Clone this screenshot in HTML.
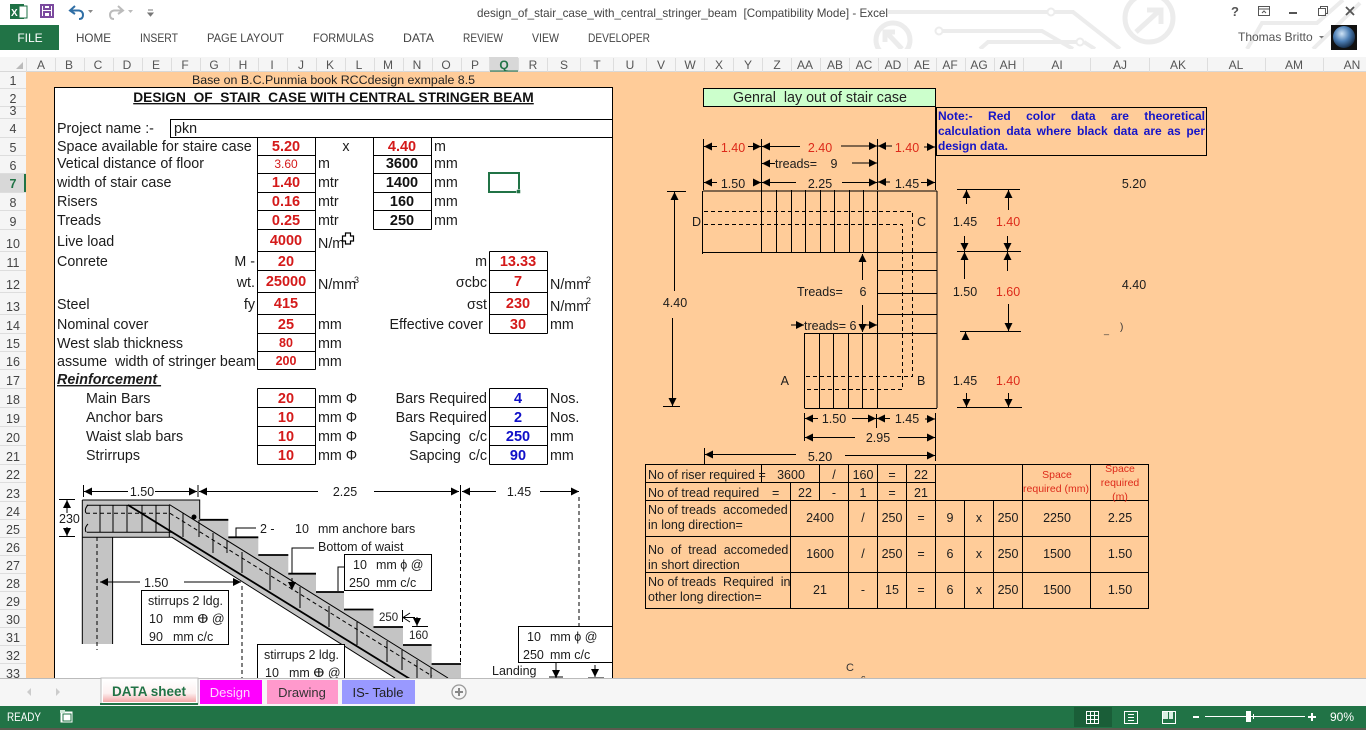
<!DOCTYPE html>
<html><head><meta charset="utf-8"><title>design_of_stair_case_with_central_stringer_beam</title>
<style>
html,body{margin:0;padding:0;width:1366px;height:730px;overflow:hidden;background:#fff}
svg{display:block;font-family:"Liberation Sans",sans-serif}
svg text{white-space:pre}
.t{font-size:14.3px;fill:#1c1c1c}
.m{text-anchor:middle}
.e{text-anchor:end}
.r{font-weight:bold;fill:#d41a1a;text-anchor:middle;font-size:14.5px}
.k{font-weight:bold;fill:#111;text-anchor:middle;font-size:14.5px}
.b{font-weight:bold;fill:#1010c8;text-anchor:middle;font-size:14.5px}
.s{font-size:12.5px;fill:#1c1c1c}
.h{font-size:12px;fill:#555;text-anchor:middle}
.n{font-size:12.5px;fill:#444;text-anchor:middle}
.red{fill:#dd2a1a}
.l{stroke:#000;stroke-width:1;fill:none}
.d{stroke:#000;stroke-width:1;fill:none;stroke-dasharray:4 3}
.a{stroke:#000;stroke-width:1;fill:none;marker-end:url(#ar);}
</style></head><body>
<svg width="1366" height="730" viewBox="0 0 1366 730" xmlns="http://www.w3.org/2000/svg">
<defs>
<marker id="ar" markerWidth="9" markerHeight="8" refX="8" refY="4" orient="auto" markerUnits="userSpaceOnUse"><path d="M0 0L8 4L0 8Z" fill="#000"/></marker>
<clipPath id="sheet"><rect x="0" y="72" width="1366" height="606"/></clipPath>
<clipPath id="rib"><rect x="860" y="0" width="506" height="49"/></clipPath>
<radialGradient id="gl" cx=".4" cy=".35" r=".7"><stop offset="0" stop-color="#cfe4f7"/><stop offset=".5" stop-color="#4d7fb5"/><stop offset="1" stop-color="#10243d"/></radialGradient>
<linearGradient id="tabg" x1="0" y1="0" x2="0" y2="1"><stop offset="0" stop-color="#fff"/><stop offset=".6" stop-color="#fdf0f0"/><stop offset="1" stop-color="#f3a8a8"/></linearGradient>
</defs>

<!-- ribbon -->
<rect width="1366" height="58" fill="#fff"/>
<g clip-path="url(#rib)" stroke="#ececec" fill="none" stroke-width="4">
<circle cx="893" cy="40" r="17" stroke-width="5"/><path d="M902 49L887 33M885 42V32H895" stroke-width="5"/>
<circle cx="1149" cy="18" r="24" stroke-width="5"/><path d="M1136 32L1160 10M1147 10H1161V24" stroke-width="5"/>
<path d="M888 12H1047M1055 12H1073L1120 49"/><circle cx="1051" cy="12" r="3.500" stroke-width="2"/>
<circle cx="939" cy="31" r="3.500" stroke-width="2"/><path d="M943 31H1042L1073 49"/>
<path d="M980 49L988 42H1076M1084 42L1095 49"/><circle cx="1080" cy="42" r="3.500" stroke-width="2"/>
<path d="M1247 49L1262 23H1317L1343 0M1313 49L1360 3"/>
</g>
<!-- qat -->
<rect x="10" y="4" width="14" height="15" fill="#1e7145"/><rect x="19" y="6" width="8" height="12" fill="#fff" stroke="#1e7145"/><text x="11" y="16" font-size="10" font-weight="bold" fill="#fff">X</text>
<g fill="none" stroke="#7b4a9e" stroke-width="2"><rect x="41" y="5" width="12" height="12"/><path d="M44 5v4h6V5M44 17v-5h6v5"/></g>
<path d="M75 6L70 10.500L75 14M70.500 10.500H79Q83 11 83 15T79 19" fill="none" stroke="#2f6ea5" stroke-width="2"/>
<path d="M88 10l2.500 3 2.500-3z" fill="#888"/>
<path d="M118 6L123 10.500L118 14M122.500 10.500H114Q110 11 110 15T114 19" fill="none" stroke="#bbb" stroke-width="2"/>
<path d="M128 10l2.500 3 2.500-3z" fill="#bbb"/>
<path d="M148 10h5M148 13l2.500 3 2.500-3z" stroke="#777" fill="#777" stroke-width="1"/>
<text x="477" y="17" font-size="12" fill="#444" textLength="411" lengthAdjust="spacingAndGlyphs">design_of_stair_case_with_central_stringer_beam  [Compatibility Mode] - Excel</text>
<text x="1235" y="16" class="m" font-size="13" font-weight="bold" fill="#555">?</text>
<g fill="none" stroke="#555"><rect x="1258.500" y="6.500" width="11" height="9"/><path d="M1258.500 9h11M1262 13l2-2 2 2"/>
<rect x="1318.500" y="8.500" width="7" height="7"/><path d="M1320.500 8.500v-2h7v7h-2"/></g>
<rect x="1289" y="12" width="8" height="2" fill="#555"/>
<path d="M1346 7l8 8M1354 7l-8 8" stroke="#555" stroke-width="1.800"/>
<rect x="0" y="25" width="59" height="25" fill="#217346"/>
<g font-size="12" fill="#444">
<text x="30" y="42" class="m" fill="#fff">FILE</text>
<text x="76" y="42" textLength="35" lengthAdjust="spacingAndGlyphs">HOME</text><text x="140" y="42" textLength="38" lengthAdjust="spacingAndGlyphs">INSERT</text><text x="207" y="42" textLength="77" lengthAdjust="spacingAndGlyphs">PAGE LAYOUT</text><text x="313" y="42" textLength="61" lengthAdjust="spacingAndGlyphs">FORMULAS</text><text x="403" y="42" textLength="31" lengthAdjust="spacingAndGlyphs">DATA</text><text x="463" y="42" textLength="40" lengthAdjust="spacingAndGlyphs">REVIEW</text><text x="532" y="42" textLength="27" lengthAdjust="spacingAndGlyphs">VIEW</text><text x="588" y="42" textLength="62" lengthAdjust="spacingAndGlyphs">DEVELOPER</text>
<text x="1238" y="41" fill="#555">Thomas Britto</text></g>
<path d="M1319 36l2.500 2.500 2.500-2.500z" fill="#777"/>
<rect x="1331" y="25" width="26" height="25" fill="#111"/><circle cx="1344" cy="37" r="11" fill="url(#gl)"/>

<!-- column header -->
<rect x="0" y="50" width="1366" height="22" fill="#fff"/>
<rect x="0" y="57" width="1366" height="15" fill="#f5f5f5"/>
<rect x="489" y="57" width="29" height="15" fill="#d8d8d8"/><rect x="489" y="70.500" width="29" height="2" fill="#217346"/>
<path d="M16 69l7-7v7z" fill="#bbb"/>
<rect y="71.500" width="1366" height="1" fill="#bbb"/>
<g stroke="#ddd"><path d="M26.500 58v14M55.500 58v14M84.500 58v14M113.500 58v14M142.500 58v14M171.500 58v14M200.500 58v14M229.500 58v14M258.500 58v14M287.500 58v14M316.500 58v14M345.500 58v14M374.500 58v14M403.500 58v14M432.500 58v14M461.500 58v14M489.500 58v14M518.500 58v14M547.500 58v14M580.500 58v14M613.500 58v14M646.500 58v14M675.500 58v14M704.500 58v14M733.500 58v14M762.500 58v14M791.500 58v14M820.500 58v14M849.500 58v14M878.500 58v14M907.500 58v14M936.500 58v14M965.500 58v14M994.500 58v14M1023.500 58v14M1090.500 58v14M1149.500 58v14M1207.500 58v14M1265.500 58v14M1323.500 58v14"/></g>
<g>
<text class="h" x="41" y="69">A</text><text class="h" x="69" y="69">B</text><text class="h" x="98" y="69">C</text><text class="h" x="127" y="69">D</text><text class="h" x="156" y="69">E</text><text class="h" x="185" y="69">F</text><text class="h" x="214" y="69">G</text><text class="h" x="243" y="69">H</text><text class="h" x="272" y="69">I</text><text class="h" x="301" y="69">J</text><text class="h" x="330" y="69">K</text><text class="h" x="359" y="69">L</text><text class="h" x="388" y="69">M</text><text class="h" x="417" y="69">N</text><text class="h" x="446" y="69">O</text><text class="h" x="475" y="69">P</text><text class="h" x="504" y="69" style="fill:#217346;font-weight:bold">Q</text><text class="h" x="533" y="69">R</text><text class="h" x="564" y="69">S</text><text class="h" x="597" y="69">T</text><text class="h" x="630" y="69">U</text><text class="h" x="661" y="69">V</text><text class="h" x="690" y="69">W</text><text class="h" x="719" y="69">X</text><text class="h" x="748" y="69">Y</text><text class="h" x="777" y="69">Z</text><text class="h" x="805" y="69">AA</text><text class="h" x="835" y="69">AB</text><text class="h" x="864" y="69">AC</text><text class="h" x="893" y="69">AD</text><text class="h" x="922" y="69">AE</text><text class="h" x="950" y="69">AF</text><text class="h" x="979" y="69">AG</text><text class="h" x="1008" y="69">AH</text><text class="h" x="1057" y="69">AI</text><text class="h" x="1120" y="69">AJ</text><text class="h" x="1178" y="69">AK</text><text class="h" x="1236" y="69">AL</text><text class="h" x="1294" y="69">AM</text><text class="h" x="1352" y="69">AN</text>
</g>

<!-- sheet -->
<g clip-path="url(#sheet)">
<rect x="26" y="72" width="1340" height="606" fill="#ffcc99"/>
<rect x="0" y="72" width="26" height="606" fill="#f5f5f5"/>
<rect x="0" y="173" width="26" height="19" fill="#d8d8d8"/><rect x="24" y="173" width="2" height="19" fill="#217346"/>
<path d="M0 88.500h26M0 106.500h26M0 118.500h26M0 137.500h26M0 155.500h26M0 173.500h26M0 192.500h26M0 210.500h26M0 229.500h26M0 251.500h26M0 270.500h26M0 292.500h26M0 314.500h26M0 333.500h26M0 351.500h26M0 369.500h26M0 388.500h26M0 407.500h26M0 426.500h26M0 445.500h26M0 464.500h26M0 482.500h26M0 501.500h26M0 519.500h26M0 537.500h26M0 555.500h26M0 573.500h26M0 591.500h26M0 609.500h26M0 627.500h26M0 645.500h26M0 663.500h26" stroke="#ddd"/>
<g>
<text class="n" x="13" y="85">1</text><text class="n" x="13" y="103">2</text><text class="n" x="13" y="115">3</text><text class="n" x="13" y="133">4</text><text class="n" x="13" y="152">5</text><text class="n" x="13" y="170">6</text><text class="n" x="13" y="188" style="fill:#217346;font-weight:bold">7</text><text class="n" x="13" y="207">8</text><text class="n" x="13" y="226">9</text><text class="n" x="13" y="248">10</text><text class="n" x="13" y="267">11</text><text class="n" x="13" y="289">12</text><text class="n" x="13" y="311">13</text><text class="n" x="13" y="330">14</text><text class="n" x="13" y="348">15</text><text class="n" x="13" y="366">16</text><text class="n" x="13" y="385">17</text><text class="n" x="13" y="404">18</text><text class="n" x="13" y="423">19</text><text class="n" x="13" y="442">20</text><text class="n" x="13" y="461">21</text><text class="n" x="13" y="479">22</text><text class="n" x="13" y="498">23</text><text class="n" x="13" y="516">24</text><text class="n" x="13" y="534">25</text><text class="n" x="13" y="552">26</text><text class="n" x="13" y="570">27</text><text class="n" x="13" y="588">28</text><text class="n" x="13" y="606">29</text><text class="n" x="13" y="624">30</text><text class="n" x="13" y="642">31</text><text class="n" x="13" y="660">32</text><text class="n" x="13" y="678">33</text>
</g>

<text x="333.500" y="84" class="m" font-size="12.400" fill="#222">Base on B.C.Punmia book RCCdesign exmpale 8.5</text>

<!-- main white form -->
<rect x="54.500" y="87.500" width="558" height="600" fill="#fff" stroke="#000"/>
<text x="333.500" y="102" class="m" font-size="13.750" font-weight="bold" fill="#111" text-decoration="underline">DESIGN  OF  STAIR  CASE WITH CENTRAL STRINGER BEAM</text>
<text x="57" y="133" class="t">Project name :-</text>
<rect x="170.500" y="119.500" width="442" height="18" fill="#fff" stroke="#000"/>
<text x="174" y="133" class="t">pkn</text>

<!-- cells -->
<g fill="none" stroke="#000">
<path d="M257.500 137.500v232M315.500 137.500v232M257.500 137.500h58M257.500 155.500h58M257.500 173.500h58M257.500 192.500h58M257.500 210.500h58M257.500 229.500h58M257.500 251.500h58M257.500 270.500h58M257.500 292.500h58M257.500 314.500h58M257.500 333.500h58M257.500 351.500h58M257.500 369.500h58"/>
<path d="M373.500 137.500v92M431.500 137.500v92M373.500 137.500h58M373.500 155.500h58M373.500 173.500h58M373.500 192.500h58M373.500 210.500h58M373.500 229.500h58"/>
<path d="M489.500 251.500v82M547.500 251.500v82M489.500 251.500h58M489.500 270.500h58M489.500 292.500h58M489.500 314.500h58M489.500 333.500h58"/>
<path d="M257.500 388.500v76M315.500 388.500v76M257.500 388.500h58M257.500 407.500h58M257.500 426.500h58M257.500 445.500h58M257.500 464.500h58"/>
<path d="M489.500 388.500v76M547.500 388.500v76M489.500 388.500h58M489.500 407.500h58M489.500 426.500h58M489.500 445.500h58M489.500 464.500h58"/>
</g>
<!-- labels -->
<g class="t">
<text class="t" x="57" y="151">Space available for staire case</text>
<text class="t" x="57" y="168">Vetical distance of floor</text>
<text class="t" x="57" y="187">width of stair case</text>
<text class="t" x="57" y="206">Risers</text>
<text class="t" x="57" y="225">Treads</text>
<text class="t" x="57" y="246">Live load</text>
<text class="t" x="57" y="266">Conrete</text>
<text class="t e" x="255" y="266">M -</text>
<text class="t e" x="255" y="287">wt.</text>
<text class="t" x="57" y="309">Steel</text>
<text class="t e" x="255" y="309">fy</text>
<text class="t" x="57" y="329">Nominal cover</text>
<text class="t" x="57" y="348">West slab thickness</text>
<text class="t" x="57" y="366">assume  width of stringer beam</text>
<text class="t" x="57" y="384" font-weight="bold" font-style="italic" text-decoration="underline">Reinforcement </text>
<text class="t" x="86" y="403">Main Bars</text>
<text class="t" x="86" y="422">Anchor bars</text>
<text class="t" x="86" y="441">Waist slab bars</text>
<text class="t" x="86" y="460">Strirrups</text>
<text class="t m" x="346" y="151">x</text>
<text class="t" x="434" y="151">m</text>
<text class="t" x="318" y="168">m</text><text class="t" x="434" y="168">mm</text>
<text class="t" x="318" y="187">mtr</text><text class="t" x="434" y="187">mm</text>
<text class="t" x="318" y="206">mtr</text><text class="t" x="434" y="206">mm</text>
<text class="t" x="318" y="225">mtr</text><text class="t" x="434" y="225">mm</text>
<text class="t" x="318" y="248">N/m</text>
<text class="t" x="318" y="289">N/mm</text><text x="354" y="283" font-size="9" fill="#222">3</text>
<text class="t" x="318" y="329">mm</text><text class="t" x="318" y="348">mm</text><text class="t" x="318" y="366">mm</text>
<text class="t" x="318" y="403">mm Φ</text><text class="t" x="318" y="422">mm Φ</text><text class="t" x="318" y="441">mm Φ</text><text class="t" x="318" y="460">mm Φ</text>
<text class="t e" x="487" y="266">m</text>
<text class="t e" x="487" y="287">σcbc</text>
<text class="t e" x="487" y="309">σst</text>
<text class="t e" x="483" y="329">Effective cover</text>
<text class="t e" x="487" y="403">Bars Required</text>
<text class="t e" x="487" y="422">Bars Required</text>
<text class="t e" x="487" y="441">Sapcing  c/c</text>
<text class="t e" x="487" y="460">Sapcing  c/c</text>
<text class="t" x="550" y="289">N/mm</text><text x="586" y="283" font-size="9" fill="#222">2</text>
<text class="t" x="550" y="311">N/mm</text><text x="586" y="304" font-size="9" fill="#222">2</text>
<text class="t" x="550" y="329">mm</text>
<text class="t" x="550" y="403">Nos.</text><text class="t" x="550" y="422">Nos.</text>
<text class="t" x="550" y="441">mm</text><text class="t" x="550" y="460">mm</text>
</g>
<!-- values -->
<text class="r" x="286" y="151">5.20</text>
<text class="r" x="286" y="168" style="font-size:12px;font-weight:normal">3.60</text>
<text class="r" x="286" y="187">1.40</text><text class="r" x="286" y="206">0.16</text><text class="r" x="286" y="225">0.25</text>
<text class="r" x="286" y="245">4000</text><text class="r" x="286" y="266">20</text><text class="r" x="286" y="286">25000</text><text class="r" x="286" y="308">415</text><text class="r" x="286" y="329">25</text>
<text class="r" x="286" y="347" style="font-size:12.500px">80</text><text class="r" x="286" y="365" style="font-size:12.500px">200</text>
<text class="r" x="286" y="403">20</text><text class="r" x="286" y="422">10</text><text class="r" x="286" y="441">10</text><text class="r" x="286" y="460">10</text>
<text class="r" x="402" y="151">4.40</text>
<text class="k" x="402" y="168">3600</text><text class="k" x="402" y="187">1400</text><text class="k" x="402" y="206">160</text><text class="k" x="402" y="225">250</text>
<text class="r" x="518" y="266">13.33</text><text class="r" x="518" y="286">7</text><text class="r" x="518" y="308">230</text><text class="r" x="518" y="329">30</text>
<text class="b" x="518" y="403">4</text><text class="b" x="518" y="422">2</text><text class="b" x="518" y="441">250</text><text class="b" x="518" y="460">90</text>
<!-- selection + cursor -->
<rect x="489" y="173" width="30" height="19" fill="none" stroke="#217346" stroke-width="2"/><rect x="516.500" y="189.500" width="4" height="4" fill="#217346" stroke="#fff" stroke-width=".5"/>
<path d="M345.500 233h5v3h3v5h-3v3h-5v-3h-3v-5h3z" fill="#fff" stroke="#000" stroke-width="1.200"/>

<!-- stair section -->
<path d="M82.300 500H199.700V519.300H228.300V537.300H258.300V555H288.300V573.700H316V592H344V609H373.500V627H403V645H431.600V663.500H461V690H413L172 537.300H112.600V644H82.300Z" fill="#c4c4c4"/>
<path d="M82.300 537.300H172L395 678M82.300 500H199.700V519.300M82.300 500V644M112.600 537.300V644" class="l"/>
<path d="M199.700 519.800H228.300M228.300 537.300H258.300M258.300 555H288.300M288.300 573.700H316M316 592H344M344 609.500H373.500M373.500 627H403M403 645H431.600M431.600 664H461" stroke="#000" stroke-width="1.800" fill="none"/>
<path d="M169.300 504.500L448 678" class="l"/>
<path d="M128 505L410 679" stroke="#000" stroke-width="1.800" fill="none"/>
<path d="M86.700 505.300H169.300V537M86.700 532.300H172" class="l" stroke-width="1.200"/>
<path d="M100 505V532M113 505V532M127 505V532M142 505V532M156 505V532M183 513V537M199 520V537M213 533V553M227 540V553M242 552V573M270 568V590M300 587V608M329 606V627M357 622V645M387 641V662M402 650V670M417 660V678M431 668V678" class="l"/>
<path d="M86 513.300H170L432 676" class="d"/>
<path d="M88 505Q84 509 86 513M88 524Q84 528 86 532" class="l"/>
<circle cx="194" cy="517" r="2.500" fill="#000"/>
<path d="M97 537V650" class="d"/>
<path d="M242 586V678M460.500 497V665M579 497V626" class="d"/>
<path d="M83.500 485V497M198 485V497M460.500 485V497" class="l"/>
<path d="M128 491.500H84" class="a"/><path d="M155 491.500H197" class="a"/><path d="M318 491.500H199" class="a"/><path d="M374 491.500H459" class="a"/><path d="M496 491.500H462" class="a"/><path d="M540 491.500H579" class="a"/>
<text class="s m" x="142" y="496">1.50</text><text class="s m" x="345" y="496">2.25</text><text class="s m" x="519" y="496">1.45</text>
<text class="s" x="59" y="523">230</text>
<path d="M59 499.500H75M59 536.500H75" class="l"/><path d="M67 513V500" class="a"/><path d="M67 527V536" class="a"/>
<!-- labels -->
<path d="M236 537V528H256M292 573V548H314M338 591V567H348" class="l"/>
<text class="s" x="260" y="533">2 -</text><text class="s" x="295" y="533">10</text><text class="s" x="318" y="533">mm anchore bars</text>
<text class="s" x="318" y="551">Bottom of waist</text>
<path d="M292 578V590" class="a"/>
<path d="M140 582H100" class="a"/><path d="M184 582H241" class="a"/>
<text class="s" x="144" y="587">1.50</text>
<rect x="344.500" y="554.500" width="87" height="36" fill="#fff" stroke="#000"/>
<text class="s" x="353" y="569">10</text><text class="s" x="376" y="569">mm ϕ @</text><text class="s" x="349" y="587">250</text><text class="s" x="376" y="587">mm c/c</text>
<rect x="141.500" y="590.500" width="87" height="54" fill="#fff" stroke="#000"/>
<text class="s" x="148" y="605">stirrups 2 ldg.</text><text class="s" x="149" y="623">10</text><text class="s" x="173" y="623">mm ⴲ @</text><text class="s" x="149" y="641">90</text><text class="s" x="173" y="641">mm c/c</text>
<rect x="257.500" y="644.500" width="87" height="50" fill="#fff" stroke="#000"/>
<text class="s" x="264" y="659">stirrups 2 ldg.</text><text class="s" x="265" y="677">10</text><text class="s" x="289" y="677">mm ⴲ @</text>
<text font-size="11.500" fill="#222" x="379" y="621">250</text>
<path d="M402.500 610V622M412 626.500H428M415 617.500H403M403 617.500L410 613M403 617.500L410 622" class="l"/><path d="M417 617V626" class="a"/>
<text font-size="11.500" fill="#222" x="409" y="639">160</text>
<rect x="518.500" y="626.500" width="94" height="36" fill="#fff" stroke="#000"/>
<text class="s" x="527" y="641">10</text><text class="s" x="550" y="641">mm ϕ @</text><text class="s" x="523" y="659">250</text><text class="s" x="550" y="659">mm c/c</text>
<text class="s" x="492" y="675">Landing</text>
<path d="M556 663V678" class="a"/><path d="M595 665V677" class="a"/>
<path d="M549 677H563M588 678H604" class="l"/>

<!-- layout title -->
<rect x="703.500" y="88.500" width="232" height="18" fill="#ccffcc" stroke="#000"/>
<text x="820" y="102" class="m" font-size="14.300" fill="#222">Genral  lay out of stair case</text>
<rect x="936.500" y="107.500" width="270" height="48" fill="#ffcc99" stroke="#000"/>
<foreignObject x="938" y="109" width="267" height="46"><div xmlns="http://www.w3.org/1999/xhtml" style="font:bold 12px/15px 'Liberation Sans',sans-serif;color:#1414c8;text-align:justify">Note:- Red color data are theoretical calculation data where black data are as per design data.</div></foreignObject>

<!-- layout drawing -->
<path d="M703.500 139V190M761.500 139V190M877.500 139V190M935.500 107V190" class="l"/>
<path d="M703 191H937M702.500 191V254M702 252.500H937M937 191V408M877.500 191V408M877 270.500H937M877 293.500H937M877 314.500H937M804.500 333.500H937M804.500 333V408M804.500 408.500H937M761.500 190V252M776.500 190V252M791.500 190V252M805.500 190V252M820.500 190V252M834.500 190V252M849.500 190V252M863.500 190V252M819.500 333V408M833.500 333V408M848.500 333V408M862.500 333V408" class="l"/>
<path d="M704 211.500H912.500V376.500H805M704 224.500H902.500V389.500H805" class="d"/>
<!-- top dims -->
<path d="M717 146.500H704" class="a"/><path d="M748 146.500H761" class="a"/><path d="M800 146.500H762" class="a"/><path d="M841 146H877" class="a"/><path d="M892 146H878" class="a"/><path d="M924 147H935" class="a"/>
<path d="M775 163.500H762" class="a"/><path d="M852 163H877" class="a"/>
<path d="M717 182.500H704" class="a"/><path d="M755 182.500H761" class="a"/><path d="M796 182.500H762" class="a"/><path d="M842 182.500H877" class="a"/><path d="M890 182H878" class="a"/><path d="M921 182.500H935" class="a"/>
<text class="s m red" x="733" y="152">1.40</text><text class="s m red" x="820" y="152">2.40</text><text class="s m red" x="907" y="152">1.40</text>
<text class="s" x="775" y="168">treads=</text><text class="s m" x="834" y="168">9</text>
<text class="s m" x="733" y="188">1.50</text><text class="s m" x="820" y="188">2.25</text><text class="s m" x="907" y="188">1.45</text>
<text class="s e" x="701" y="226">D</text><text class="s" x="917" y="226">C</text>
<text class="s e" x="789" y="385">A</text><text class="s" x="917" y="385">B</text>
<text class="s m" x="675" y="307">4.40</text>
<text class="s" x="797" y="296">Treads=</text><text class="s m" x="863" y="296">6</text>
<text class="s" x="804" y="330">treads= 6</text>
<text class="s m" x="965" y="226">1.45</text><text class="s m red" x="1008" y="226">1.40</text>
<text class="s m" x="965" y="296">1.50</text><text class="s m red" x="1008" y="296">1.60</text>
<text class="s m" x="965" y="385">1.45</text><text class="s m red" x="1008" y="385">1.40</text>
<text class="s m" x="834" y="423">1.50</text><text class="s m" x="907" y="423">1.45</text>
<text class="s m" x="878" y="442">2.95</text><text class="s m" x="820" y="461">5.20</text>
<text class="s m" x="1134" y="188">5.20</text><text class="s m" x="1134" y="289">4.40</text>
<path d="M667 191.500H686M663 406.500H680" class="l"/>
<path d="M674.500 291V192" class="a"/><path d="M672.500 318V406" class="a"/>
<path d="M862.500 280V254" class="a"/><path d="M862.500 305V332" class="a"/>
<path d="M791 325H804" class="a"/><path d="M860 325H877" class="a"/>
<path d="M957 189.500H1020M957 251.500H1021M960 331.500H1021M957 407.500H1022" class="l"/>
<path d="M966.500 204V190" class="a"/><path d="M1008.500 210V190" class="a"/><path d="M964.500 236V251" class="a"/><path d="M1007.500 236V251" class="a"/><path d="M964.500 279V252" class="a"/><path d="M1007.500 271V252" class="a"/><path d="M1008.500 304V331" class="a"/><path d="M965.500 340V332" class="a"/><path d="M966.500 393V407" class="a"/><path d="M1008.500 393V407" class="a"/>
<path d="M804.500 413V441M876.500 414V428M935.500 413V461M704.500 448V464" class="l"/>
<path d="M818 418.500H805" class="a"/><path d="M852 418.500H876" class="a"/><path d="M890 418.500H877" class="a"/><path d="M925 419H935" class="a"/>
<path d="M855 437.500H805" class="a"/><path d="M898 437.500H935" class="a"/>
<path d="M796 454.500H705" class="a"/><path d="M845 455.500H935" class="a"/>

<!-- bottom table -->
<rect x="645.500" y="464.500" width="503" height="144" fill="none" stroke="#000"/>
<path d="M645.500 482.500H935.500M645.500 500.500H1148.500M645.500 536.500H1148.500M645.500 572.500H1148.500
M761.500 464.500V482.500M819.500 464.500V500.500M848.500 464.500V608.500M877.500 464.500V608.500M906.500 464.500V608.500M935.500 464.500V608.500M790.500 482.500V608.500M964.500 500.500V608.500M993.500 500.500V608.500M1022.500 464.500V608.500M1090.500 464.500V608.500" stroke="#000" fill="none"/>
<g>
<text class="s" x="648" y="479">No of riser required =</text><text class="s m" x="791" y="479">3600</text><text class="s m" x="834" y="479">/</text><text class="s m" x="863" y="479">160</text><text class="s m" x="892" y="479">=</text><text class="s m" x="921" y="479">22</text>
<text class="s" x="648" y="497">No of tread required</text><text class="s" x="772" y="497">=</text><text class="s m" x="805" y="497">22</text><text class="s m" x="834" y="497">-</text><text class="s m" x="863" y="497">1</text><text class="s m" x="892" y="497">=</text><text class="s m" x="921" y="497">21</text>
<text class="m" x="1057" y="478" font-size="10.500" fill="#dd2a1a">Space</text><text class="m" x="1056" y="492" font-size="10.500" fill="#dd2a1a">required (mm)</text>
<text class="m" x="1120" y="472" font-size="10.500" fill="#dd2a1a">Space</text><text class="m" x="1120" y="486" font-size="10.500" fill="#dd2a1a">required</text><text class="m" x="1120" y="500" font-size="10.500" fill="#dd2a1a">(m)</text>
<text class="s" x="648" y="514">No of treads  accomeded</text><text class="s" x="648" y="529">in long direction=</text>
<text class="s" x="648" y="554">No  of  tread  accomeded</text><text class="s" x="648" y="569">in short direction</text>
<text class="s" x="648" y="586">No of treads  Required  in</text><text class="s" x="648" y="601">other long direction=</text>
<text class="s m" x="820" y="522">2400</text><text class="s m" x="863" y="522">/</text><text class="s m" x="892" y="522">250</text><text class="s m" x="921" y="522">=</text><text class="s m" x="950" y="522">9</text><text class="s m" x="979" y="522">x</text><text class="s m" x="1008" y="522">250</text><text class="s m" x="1057" y="522">2250</text><text class="s m" x="1120" y="522">2.25</text>
<text class="s m" x="820" y="558">1600</text><text class="s m" x="863" y="558">/</text><text class="s m" x="892" y="558">250</text><text class="s m" x="921" y="558">=</text><text class="s m" x="950" y="558">6</text><text class="s m" x="979" y="558">x</text><text class="s m" x="1008" y="558">250</text><text class="s m" x="1057" y="558">1500</text><text class="s m" x="1120" y="558">1.50</text>
<text class="s m" x="820" y="594">21</text><text class="s m" x="863" y="594">-</text><text class="s m" x="892" y="594">15</text><text class="s m" x="921" y="594">=</text><text class="s m" x="950" y="594">6</text><text class="s m" x="979" y="594">x</text><text class="s m" x="1008" y="594">250</text><text class="s m" x="1057" y="594">1500</text><text class="s m" x="1120" y="594">1.50</text>
</g>
<text x="1104" y="333" font-size="9" fill="#333">_</text><text x="1120" y="330" font-size="10" fill="#333">)</text>
<text x="846" y="671" font-size="11" fill="#333">C</text><text x="861" y="681" font-size="9" fill="#333">c</text>
</g>

<!-- tab bar -->
<rect x="0" y="678" width="1366" height="28" fill="#f6f6f6"/><rect y="678" width="1366" height="1" fill="#bbb"/>
<path d="M31 688l-4 4 4 4z" fill="#ccc"/><path d="M56 688l4 4-4 4z" fill="#ccc"/>
<rect x="101" y="678" width="97" height="26" fill="#fff" stroke="#bbb"/><rect x="103" y="680" width="93" height="22" fill="url(#tabg)"/><rect x="100" y="703" width="98" height="2" fill="#217346"/>
<text x="149" y="696" class="m" font-size="13.500" font-weight="bold" fill="#217346">DATA sheet</text>
<rect x="200" y="680" width="62" height="24" fill="#ff00ff"/><text x="230" y="697" class="m" font-size="13" fill="#ffd6ff">Design</text>
<rect x="267" y="680" width="71" height="24" fill="#ff99cc"/><text x="302" y="697" class="m" font-size="13" fill="#333">Drawing</text>
<rect x="342" y="680" width="73" height="24" fill="#9999ff"/><text x="378" y="697" class="m" font-size="13" fill="#222">IS- Table</text>
<circle cx="459" cy="692" r="7" fill="none" stroke="#999" stroke-width="1.300"/><path d="M455 692h8M459 688v8" stroke="#888" stroke-width="2"/>

<!-- status bar -->
<rect x="0" y="706" width="1366" height="22" fill="#217346"/><rect x="0" y="728" width="1366" height="2" fill="#5a5a4e"/>
<text x="7" y="721" font-size="11.500" fill="#fff" textLength="34" lengthAdjust="spacingAndGlyphs">READY</text>
<rect x="60.500" y="711.500" width="12" height="11" fill="#fff"/><rect x="63" y="714" width="8" height="7" fill="none" stroke="#217346"/><rect x="60" y="710" width="5" height="3" fill="#cfe8d8"/>
<rect x="1074" y="707" width="38" height="20" fill="#1a5e38"/>
<g fill="none" stroke="#fff"><path d="M1086.500 711.500h12v12h-12zM1090.500 711.500v12M1094.500 711.500v12M1086.500 715.500h12M1086.500 719.500h12"/>
<rect x="1124.500" y="711.500" width="13" height="12"/><path d="M1128 714.500h6M1128 717.500h6M1128 720.500h6"/>
<rect x="1162.500" y="711.500" width="13" height="12"/><path d="M1205 716.500h100"/></g>
<rect x="1163" y="712" width="5" height="7" fill="#d8efe2"/><rect x="1169" y="712" width="4" height="7" fill="#d8efe2"/>
<rect x="1193" y="716" width="6" height="2" fill="#fff"/><rect x="1308" y="716" width="8" height="2" fill="#fff"/><rect x="1311" y="713" width="2" height="8" fill="#fff"/>
<rect x="1246" y="711" width="5" height="11" fill="#fff"/><rect x="1253" y="714" width="1" height="5" fill="#fff"/>
<text x="1330" y="721" font-size="12" fill="#fff">90%</text>
</svg>
</body></html>
